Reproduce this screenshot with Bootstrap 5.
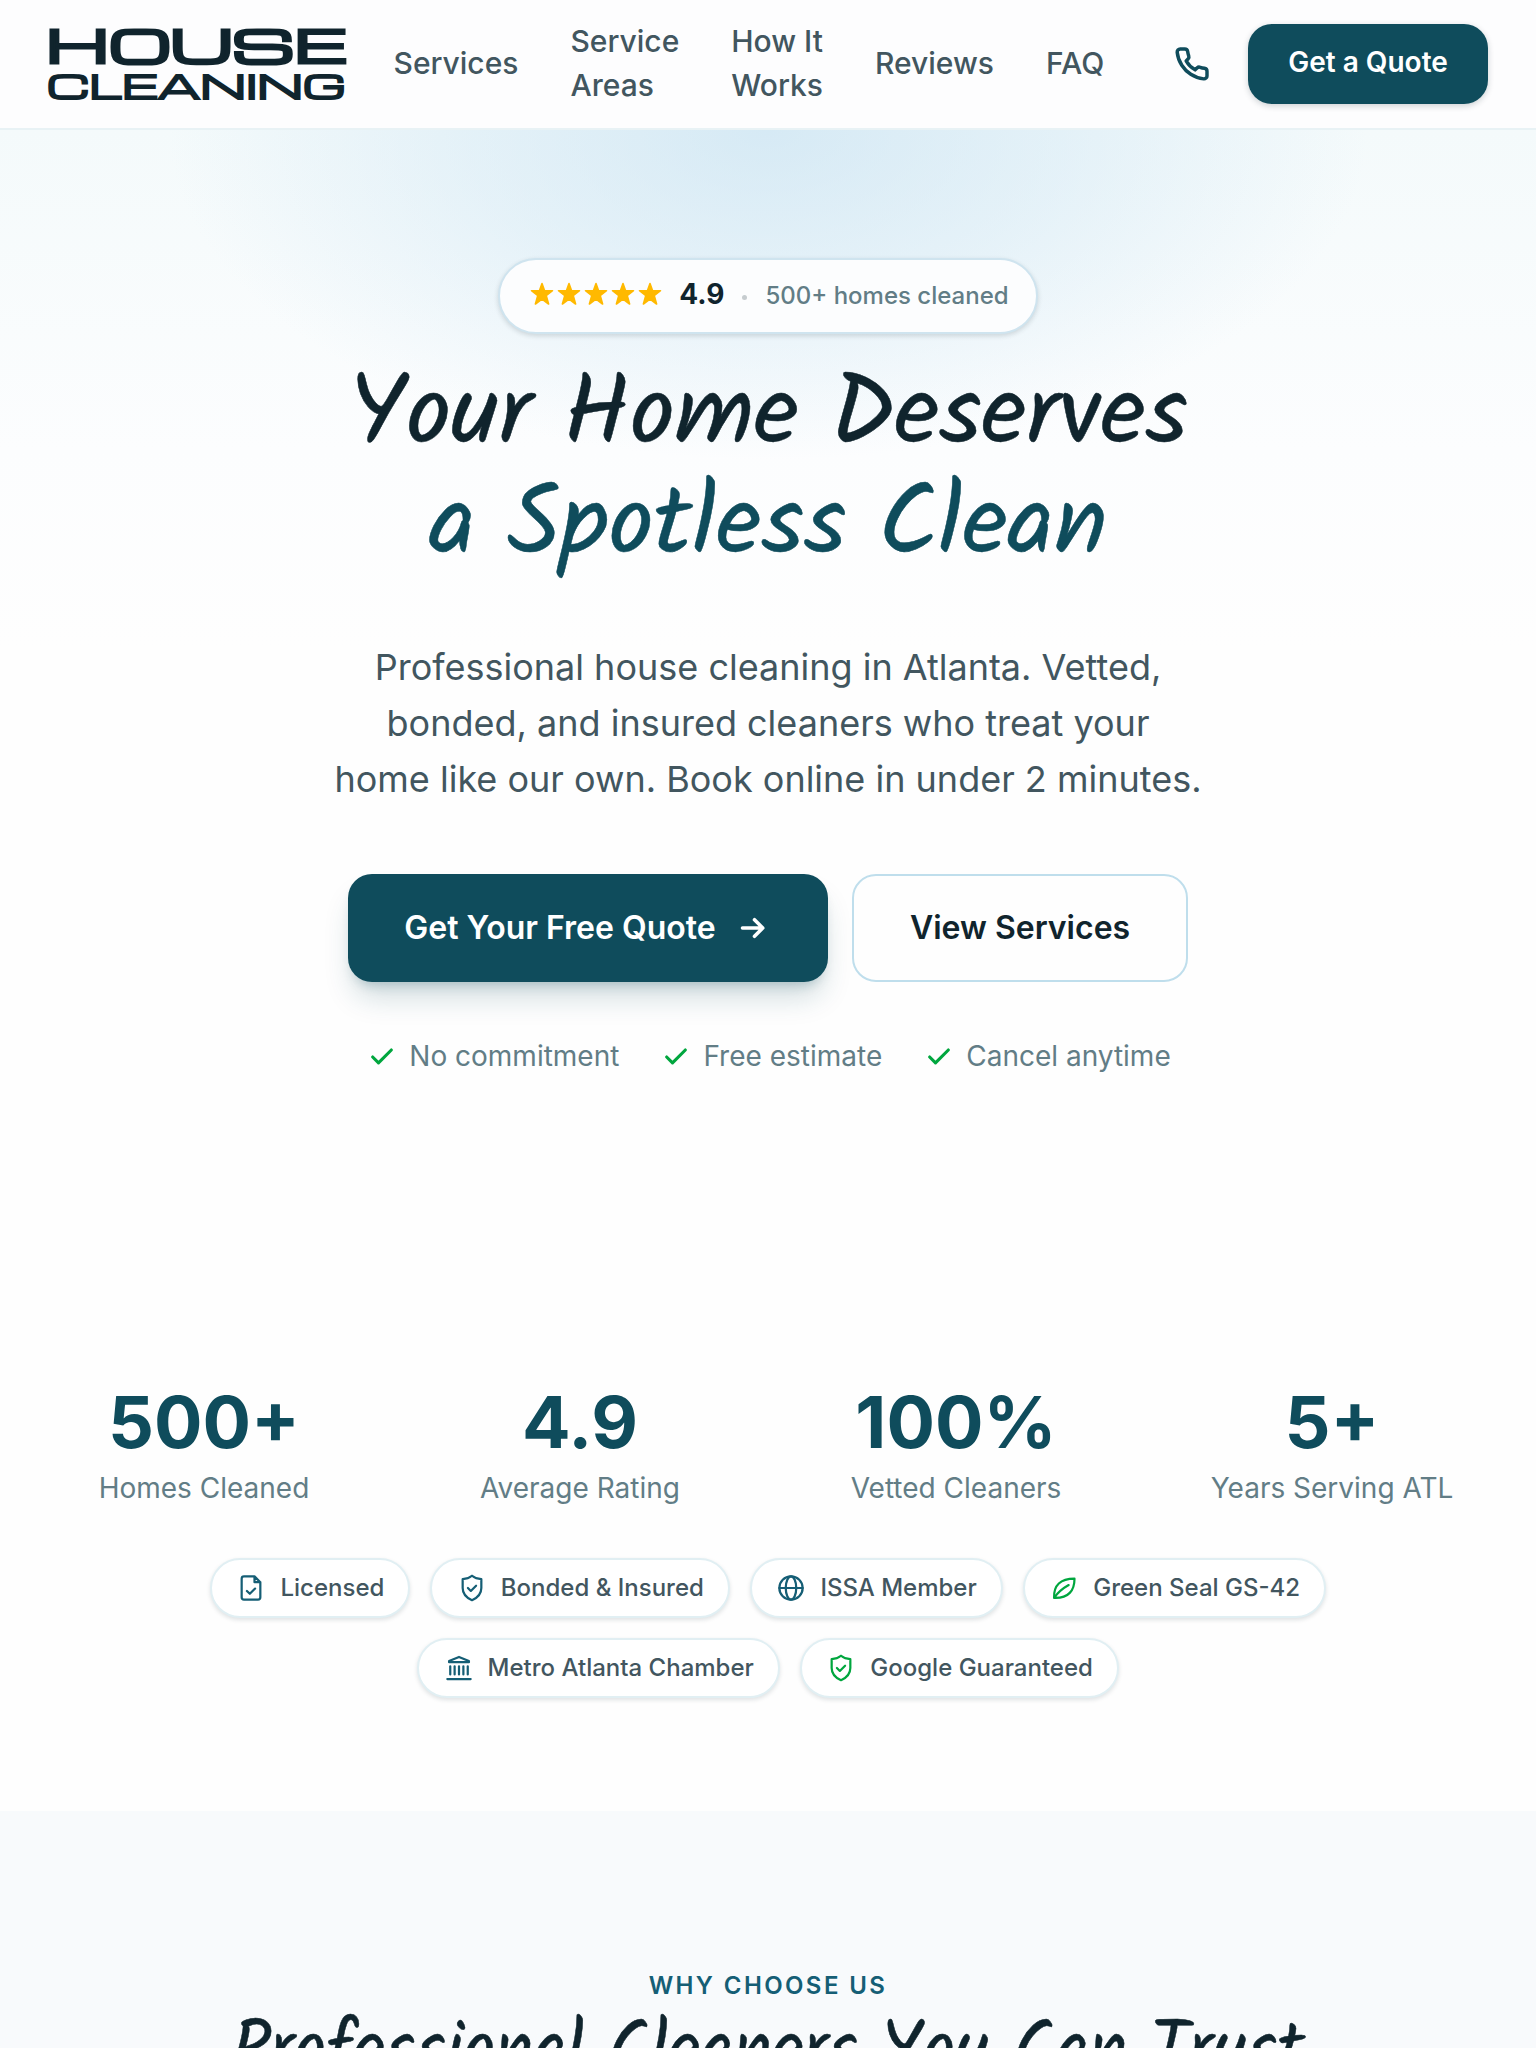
<!DOCTYPE html>
<html lang="en">
<head>
    <meta charset="UTF-8">
    <meta name="viewport" content="width=device-width, initial-scale=1.0">
    <title>House Cleaning Atlanta</title>
    <link rel="stylesheet" href="https://cdn.jsdelivr.net/npm/bootstrap@5.3.0/dist/css/bootstrap.min.css">
    <style>
        :root {
            --brand: #0f4c5c;
            --accent: #155e75;
            --ink: #10242d;
            --body-ink: #42565f;
            --soft-ink: #627d86;
            --leaf-green: #00a63e;
        }
        body {
            font-family: Inter, "Liberation Sans", sans-serif;
            font-size: 28px;
            color: var(--ink);
            background: #fefefe;
        }
        svg {
            fill: none;
            stroke: currentColor;
            stroke-width: 2;
            stroke-linecap: round;
            stroke-linejoin: round;
            flex-shrink: 0;
        }

        /* Header */
        .site-header {
            height: 130px;
            padding: 0 48px;
            background: #fdfdfe;
            border-bottom: 2px solid #e8f2f5;
        }
        .logo { overflow: visible; }
        .logo text {
            font-family: Michroma, Inter, sans-serif;
            fill: var(--ink);
            stroke: var(--ink);
            stroke-linejoin: miter;
        }
        .site-menu {
            gap: 52px;
            margin: -2px 0 0 48.5px;
        }
        .site-menu a {
            font-size: 30px;
            font-weight: 500;
            line-height: 44px;
            color: var(--body-ink);
        }
        .phone-link { color: var(--brand); margin-right: 38px; }
        .phone-link svg { stroke-width: 2.3; }
        .cta {
            background: var(--brand);
            color: #fff;
            font-weight: 600;
            border-radius: 24px;
        }
        .cta-header {
            width: 240px;
            height: 80px;
            padding-bottom: 4px;
            font-size: 28px;
            box-shadow: 0 2px 6px rgba(16, 36, 45, .2);
        }

        /* Hero */
        .hero {
            padding-top: 128px;
            background:
                radial-gradient(ellipse 600px 330px at 50% 0, rgba(196, 224, 241, .62), rgba(203, 228, 243, .4) 50%, rgba(215, 235, 246, 0)),
                linear-gradient(#f4fafb, #fcfdfe 320px, #fefefe 520px);
        }
        .rating {
            width: 540px;
            height: 76px;
            padding-left: 29.5px;
            background: #fcfdfe;
            border: 2px solid #cfe4ef;
            box-shadow: 0 2px 5px rgba(16, 36, 45, .16);
        }
        .stars { gap: 3.2px; color: #ffb900; margin-top: -4px; }
        .stars svg { fill: currentColor; stroke-width: 1.6; }
        .score { margin-left: 17px; font-weight: 700; line-height: 36px; margin-top: -5px; }
        .dot { width: 5px; height: 5px; margin: 2px 18px 0; background: #c6cccf; }
        .rating-note { font-size: 24px; font-weight: 500; color: var(--soft-ink); }

        .script-face {
            font-family: Kalam, Lato, sans-serif;
            font-weight: 400;
            -webkit-text-stroke: .5px currentColor;
        }
        .hero h1 {
            margin: 29px 0 55px;
            font-size: 100px;
            line-height: 110.4px;
            letter-spacing: -.35px;
            word-spacing: -8px;
        }
        .hero h1 span { color: var(--brand); letter-spacing: -.1px; }
        .hero-copy {
            margin-bottom: 67px;
            font-size: 36px;
            line-height: 56px;
            color: var(--body-ink);
        }
        .cta-row { gap: 24px; font-size: 32px; }
        .cta-main {
            width: 480px;
            height: 108px;
            gap: 20px;
            box-shadow: 0 20px 30px -6px rgba(17, 75, 92, .2), 0 8px 12px -6px rgba(17, 75, 92, .25);
        }
        .cta-main svg { margin-left: -1px; margin-right: 1px; stroke-width: 2.4; }
        .cta-plain {
            width: 336px;
            height: 108px;
            font-weight: 600;
            border: 2px solid #bfdeec;
            border-radius: 24px;
        }
        .promises {
            gap: 43px;
            margin-top: 54px;
            padding-left: 3px;
            line-height: 40px;
            color: var(--soft-ink);
        }
        .promises div { gap: 13px; }
        .promises svg { margin-top: 3px; stroke-width: 2.7; color: var(--leaf-green); }

        /* Stats */
        .stats {
            margin-top: 310px;
            padding: 0 48px;
        }
        .stats .row { --bs-gutter-x: 64px; }
        .stat-value {
            font-size: 72px;
            font-weight: 700;
            line-height: 72px;
            color: var(--brand);
        }
        .stat-label { margin-top: 10px; line-height: 40px; color: var(--soft-ink); }

        .trust {
            gap: 20px;
            padding: 50px 160px 113px;
            font-size: 24px;
            font-weight: 500;
            color: var(--body-ink);
        }
        .trust-pill {
            height: 60px;
            gap: 15px;
            padding: 0 24px 0 25.5px;
            background: #fff;
            border: 2px solid #e1eff3;
            box-shadow: 0 2px 4px rgba(16, 36, 45, .13);
        }
        .trust-pill svg { color: var(--accent); stroke-width: 1.9; }
        .trust-pill svg.is-green { color: var(--leaf-green); }

        /* Why us */
        .why {
            height: 237px;
            padding-top: 157px;
            background: #f8fafc;
        }
        .eyebrow {
            font-size: 24px;
            font-weight: 600;
            line-height: 36px;
            letter-spacing: 2.4px;
            color: var(--accent);
        }
        .why h2 {
            margin-top: 7px;
            font-size: 71.4px;
            line-height: 83px;
            word-spacing: -5px;
            white-space: nowrap;
        }
    </style>
</head>
<body>
    <header class="site-header d-flex align-items-center">
        <svg class="logo" width="297" height="76" viewBox="0 0 297 76" role="img" aria-label="House Cleaning">
            <text x="-2" y="37" font-size="43.500" stroke-width="3.200" textLength="300" lengthAdjust="spacingAndGlyphs">HOUSE</text>
            <text x="-1" y="72.500" font-size="31" stroke-width="2" textLength="299" lengthAdjust="spacingAndGlyphs">CLEANING</text>
        </svg>
        <nav class="site-menu d-flex align-items-center">
            <a class="text-decoration-none" href="#services">Services</a>
            <a class="text-decoration-none" href="#areas">Service<br>Areas</a>
            <a class="text-decoration-none" href="#how">How It<br>Works</a>
            <a class="text-decoration-none" href="#reviews">Reviews</a>
            <a class="text-decoration-none" href="#faq">FAQ</a>
        </nav>
        <a class="phone-link d-flex ms-auto" href="#call" aria-label="Call us">
            <svg width="36" height="36" viewBox="0 0 24 24"><path d="M22 16.920v3a2 2 0 0 1-2.180 2 19.790 19.790 0 0 1-8.630-3.070 19.500 19.500 0 0 1-6-6 19.790 19.790 0 0 1-3.070-8.670A2 2 0 0 1 4.110 2h3a2 2 0 0 1 2 1.720 12.840 12.840 0 0 0 .7 2.810 2 2 0 0 1-.45 2.110L8.090 9.910a16 16 0 0 0 6 6l1.270-1.270a2 2 0 0 1 2.110-.45 12.840 12.840 0 0 0 2.810.7A2 2 0 0 1 22 16.920z"/></svg>
        </a>
        <a class="cta cta-header d-flex align-items-center justify-content-center text-decoration-none" href="#quote">Get a Quote</a>
    </header>

    <section class="hero text-center">
        <div class="rating rounded-pill d-flex align-items-center mx-auto">
            <div class="stars d-flex">
                <svg width="24" height="24" viewBox="0 0 24 24"><path d="M12 1.500l2.600 7.200h7.900l-6.300 4.800 2.400 8.500-6.600-5-6.600 5 2.400-8.500-6.300-4.800h7.900z"/></svg>
                <svg width="24" height="24" viewBox="0 0 24 24"><path d="M12 1.500l2.600 7.200h7.900l-6.300 4.800 2.400 8.500-6.600-5-6.600 5 2.400-8.500-6.300-4.800h7.900z"/></svg>
                <svg width="24" height="24" viewBox="0 0 24 24"><path d="M12 1.500l2.600 7.200h7.900l-6.300 4.800 2.400 8.500-6.600-5-6.600 5 2.400-8.500-6.300-4.800h7.900z"/></svg>
                <svg width="24" height="24" viewBox="0 0 24 24"><path d="M12 1.500l2.600 7.200h7.900l-6.300 4.800 2.400 8.500-6.600-5-6.600 5 2.400-8.500-6.300-4.800h7.900z"/></svg>
                <svg width="24" height="24" viewBox="0 0 24 24"><path d="M12 1.500l2.600 7.200h7.900l-6.300 4.800 2.400 8.500-6.600-5-6.600 5 2.400-8.500-6.300-4.800h7.900z"/></svg>
            </div>
            <span class="score">4.9</span>
            <span class="dot rounded-circle"></span>
            <span class="rating-note">500+ homes cleaned</span>
        </div>

        <h1 class="script-face">Your Home Deserves<br><span>a Spotless Clean</span></h1>

        <p class="hero-copy">Professional house cleaning in Atlanta. Vetted,<br>bonded, and insured cleaners who treat your<br>home like our own. Book online in under 2 minutes.</p>

        <div class="cta-row d-flex justify-content-center">
            <a class="cta cta-main d-flex align-items-center justify-content-center text-decoration-none" href="#quote">
                Get Your Free Quote
                <svg width="36" height="36" viewBox="0 0 24 24"><path d="M5 12h13.500M13 6.500l5.500 5.500-5.500 5.500"/></svg>
            </a>
            <a class="cta-plain d-flex align-items-center justify-content-center text-decoration-none text-reset" href="#services">View Services</a>
        </div>

        <div class="promises d-flex justify-content-center">
            <div class="d-flex align-items-center">
                <svg width="28" height="28" viewBox="0 0 24 24"><path d="M20 6 9 17l-5-5"/></svg>No commitment
            </div>
            <div class="d-flex align-items-center">
                <svg width="28" height="28" viewBox="0 0 24 24"><path d="M20 6 9 17l-5-5"/></svg>Free estimate
            </div>
            <div class="d-flex align-items-center">
                <svg width="28" height="28" viewBox="0 0 24 24"><path d="M20 6 9 17l-5-5"/></svg>Cancel anytime
            </div>
        </div>
    </section>

    <section class="stats text-center">
        <div class="row">
            <div class="col-3">
                <div class="stat-value">500+</div>
                <div class="stat-label">Homes Cleaned</div>
            </div>
            <div class="col-3">
                <div class="stat-value">4.9</div>
                <div class="stat-label">Average Rating</div>
            </div>
            <div class="col-3">
                <div class="stat-value">100%</div>
                <div class="stat-label">Vetted Cleaners</div>
            </div>
            <div class="col-3">
                <div class="stat-value">5+</div>
                <div class="stat-label">Years Serving ATL</div>
            </div>
        </div>
    </section>

    <section class="trust d-flex flex-wrap justify-content-center">
        <div class="trust-pill rounded-pill d-flex align-items-center">
            <svg width="28" height="28" viewBox="0 0 24 24"><path d="M15 2H6a2 2 0 0 0-2 2v16a2 2 0 0 0 2 2h12a2 2 0 0 0 2-2V7ZM15 2v5h5M8.500 14.500l2.500 2.500 4.500-4.500"/></svg>
            Licensed
        </div>
        <div class="trust-pill rounded-pill d-flex align-items-center">
            <svg width="28" height="28" viewBox="0 0 24 24"><path d="M12 1.500c2.300 1.900 5 2.800 8 2.900V12c0 5.500-3.500 8.500-8 10.500C7.500 20.500 4 17.500 4 12V4.400c3-.1 5.700-1 8-2.900zM8.500 12l2.500 2.500 4.500-4.500"/></svg>
            Bonded &amp; Insured
        </div>
        <div class="trust-pill rounded-pill d-flex align-items-center">
            <svg width="28" height="28" viewBox="0 0 24 24"><circle cx="12" cy="12" r="10"/><ellipse cx="12" cy="12" rx="4.500" ry="10"/><path d="M2 12h20"/></svg>
            ISSA Member
        </div>
        <div class="trust-pill rounded-pill d-flex align-items-center">
            <svg class="is-green" width="28" height="28" viewBox="0 0 24 24"><path d="M21 4C21 14 16 21 3.500 20.500 3 9.500 9 4 21 4zM3.500 20.500C7 15.500 11 12.300 16 9.500"/></svg>
            Green Seal GS-42
        </div>
        <div class="trust-pill rounded-pill d-flex align-items-center">
            <svg width="28" height="28" viewBox="0 0 24 24"><path d="M12 2.500 20.500 6v1h-17V6zM4.500 10.500v7M8.250 10.500v7M12 10.500v7M15.750 10.500v7M19.500 10.500v7M2 21.500h20"/></svg>
            Metro Atlanta Chamber
        </div>
        <div class="trust-pill rounded-pill d-flex align-items-center">
            <svg class="is-green" width="28" height="28" viewBox="0 0 24 24"><path d="M12 1.500c2.300 1.900 5 2.800 8 2.900V12c0 5.500-3.500 8.500-8 10.500C7.500 20.500 4 17.500 4 12V4.400c3-.1 5.700-1 8-2.900zM8.500 12l2.500 2.500 4.500-4.500"/></svg>
            Google Guaranteed
        </div>
    </section>

    <section class="why text-center overflow-hidden">
        <div class="eyebrow">WHY CHOOSE US</div>
        <h2 class="script-face">Professional Cleaners You Can Trust</h2>
    </section>

    <script src="https://cdn.jsdelivr.net/npm/bootstrap@5.3.0/dist/js/bootstrap.bundle.min.js"></script>
</body>
</html>
